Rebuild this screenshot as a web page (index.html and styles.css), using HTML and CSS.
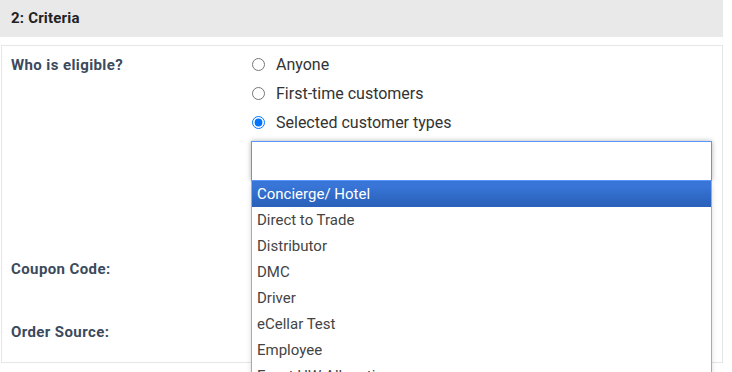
FILE: index.html
```html
<!DOCTYPE html>
<html lang="en">
<head>
    <meta charset="UTF-8">
    <meta name="viewport" content="width=device-width, initial-scale=1.0">
    <title>Coupon Criteria</title>
    <link rel="stylesheet" href="styles.css">
</head>
<body>
    <div class="section">
        <h2 class="section-title">2: Criteria</h2>

        <div class="panel">
            <div class="row row-eligible">
                <label class="row-label">Who is eligible?</label>
                <div class="row-field">
                    <label class="radio"><input type="radio" name="eligible" value="anyone"> Anyone</label>
                    <label class="radio"><input type="radio" name="eligible" value="first"> First-time customers</label>
                    <label class="radio"><input type="radio" name="eligible" value="types" checked> Selected customer types</label>

                    <div class="chosen">
                        <div class="chosen-choices"></div>
                        <ul class="chosen-results">
                            <li class="highlighted">Concierge/ Hotel</li>
                            <li>Direct to Trade</li>
                            <li>Distributor</li>
                            <li>DMC</li>
                            <li>Driver</li>
                            <li>eCellar Test</li>
                            <li>Employee</li>
                            <li>Event HW Allocation</li>
                            <li>Friends &amp; Family</li>
                        </ul>
                    </div>
                </div>
            </div>

            <div class="row row-coupon">
                <label class="row-label">Coupon Code:</label>
                <div class="row-field"></div>
            </div>

            <div class="row row-source">
                <label class="row-label">Order Source:</label>
                <div class="row-field"></div>
            </div>
        </div>
    </div>
</body>
</html>
```

FILE: styles.css
```css
html, body {
    height: 372px;
    overflow: hidden;
}

body {
    margin: 0;
    padding: 0;
    font-family: Roboto, "Liberation Sans", sans-serif;
    color: #333;
    background-color: #fff;
}

.section {
    width: 723px;
}

.section-title {
    margin: 0;
    height: 37px;
    padding: 0 11px;
    background-color: #e9e9e9;
    font-size: 15px;
    font-weight: bold;
    letter-spacing: 0.2px;
    line-height: 37px;
    color: #222;
}

.panel {
    margin: 8px 0 0 1px;
    border: 1px solid #e6e6e6;
    padding: 4px 9px 15px 9px;
}

.row {
    display: flex;
}

.row-label {
    width: 240px;
    flex-shrink: 0;
    font-size: 15px;
    font-weight: bold;
    letter-spacing: 0.4px;
    line-height: 30px;
    color: #3b4a5c;
}

.row-field {
    flex: 1;
    min-height: 29px;
}

.row-coupon {
    margin-top: 73px;
}

.row-source {
    margin-top: 33px;
}

.radio {
    display: flex;
    align-items: center;
    height: 29px;
    font-size: 16px;
    color: #333;
}

.radio input {
    margin: 0 11px 0 1px;
    width: 13px;
    height: 13px;
}

.chosen {
    position: relative;
    width: 461px;
    margin-top: 4px;
}

.chosen-choices {
    height: 40px;
    box-sizing: border-box;
    border: 1px solid #5897fb;
    background-color: #fff;
    box-shadow: 0 0 5px rgba(0, 0, 0, 0.3);
}

.chosen-results {
    position: absolute;
    top: 40px;
    left: 0;
    width: 100%;
    box-sizing: border-box;
    margin: 0;
    padding: 0;
    list-style: none;
    background-color: #fff;
    border: 1px solid #aaa;
    border-top: 0;
    box-shadow: 0 4px 5px rgba(0, 0, 0, 0.15);
    z-index: 10;
}

.chosen-results li {
    height: 26px;
    padding: 0 5px;
    font-size: 15px;
    line-height: 27px;
    color: #444;
}

.chosen-results li.highlighted {
    background-color: #3875d7;
    background-image: linear-gradient(#3875d7 20%, #2a62bc 90%);
    color: #fff;
}
```
